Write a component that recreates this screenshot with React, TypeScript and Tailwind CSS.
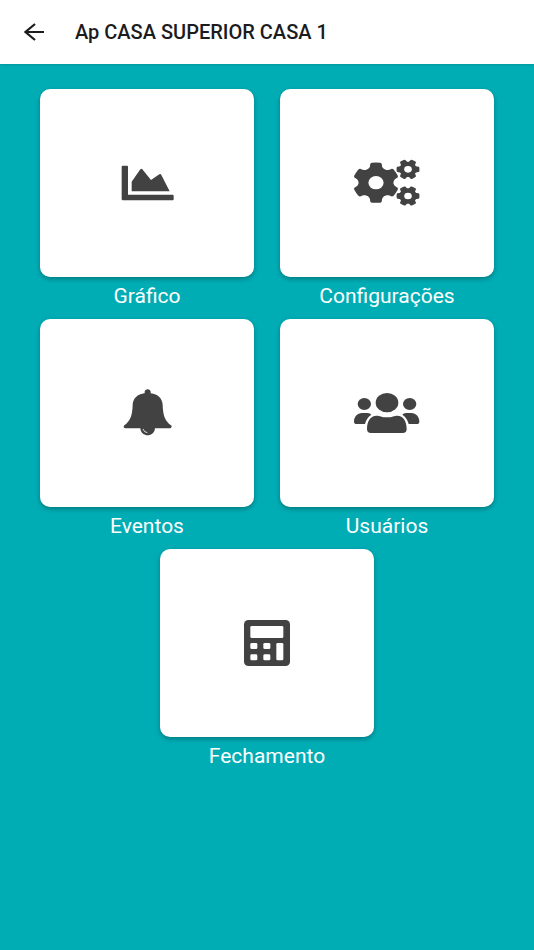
import type { ReactNode } from "react";

const Gear = ({ transform, body, tooth, hole, start }: {
  transform: string;
  body: number;
  tooth: string;
  hole: number;
  start: number;
}) => (
  <g transform={transform}>
    <circle r={body} />
    {[0, 60, 120, 180, 240, 300].map((angle) => (
      <path key={angle} d={tooth} transform={`rotate(${angle + start})`} />
    ))}
    <circle r={hole} fill="#fff" />
  </g>
);

const smallTooth = "M-10 -18 L-8 -28 Q-7 -30 -4 -30 H4 Q7 -30 8 -28 L10 -18Z";

const items: { label: string; viewBox: string; icon: ReactNode }[] = [
  {
    label: "Gráfico",
    viewBox: "36 24 210 150",
    icon: (
      <>
        <path d="M68 47h13q3 0 3 3v84h134q3 0 3 3v11q0 3-3 3H69q-4 0-4-4V50q0-3 3-3z" />
        <path d="M95 124V95l26-37q3-4 6 0l26 32 25-17q4-2 6 2l25 49z" />
      </>
    ),
  },
  {
    label: "Configurações",
    viewBox: "36 24 210 150",
    icon: (
      <>
        <Gear
          transform="translate(108 98) scale(1.14 1)"
          body={46}
          hole={20}
          start={0}
          tooth="M-22 -38 L-16 -48 L-15 -57 Q-14 -59 -11 -60 Q0 -61 11 -60 Q14 -59 15 -57 L16 -48 L22 -38Z"
        />
        <Gear transform="translate(204 58) scale(1.14 1)" body={23} hole={10} start={30} tooth={smallTooth} />
        <Gear transform="translate(204 138) scale(1.14 1)" body={23} hole={10} start={30} tooth={smallTooth} />
      </>
    ),
  },
  {
    label: "Eventos",
    viewBox: "36 39 210 150",
    icon: (
      <>
        <path d="M134 55v-5c0-10 18-10 18 0v5C174 58 187 70 188 90C189 122 195 138 213 151C217 155 214 160 209 160H165C163 188 123 188 121 160H77C71 160 69 155 73 151C91 138 97 122 98 90C99 70 112 58 134 55z" />
        <path d="M129 162q3 10 13 11" fill="none" stroke="#fff" strokeWidth="2.5" />
      </>
    ),
  },
  {
    label: "Usuários",
    viewBox: "36 39 210 150",
    icon: (
      <>
        <ellipse cx="141" cy="83" rx="34" ry="29" />
        <ellipse cx="73" cy="87" rx="20" ry="18" />
        <ellipse cx="209" cy="87" rx="20" ry="18" />
        <path d="M81 162c0-23 10-40 29-40 9 0 16 5 31 5s22-5 31-5c18 0 28 17 28 40 0 8-4 12-12 12H93c-8 0-12-4-12-12z" />
        <path d="M94 119c-4-4-10-5-16-5H66c-14 0-24 11-24 26 0 5 3 7 8 7h25c3-12 9-22 19-28z" />
        <path d="M187 119c4-4 10-5 16-5h11c14 0 24 11 24 26 0 5-3 7-8 7h-24c-3-12-9-22-19-28z" />
      </>
    ),
  },
  {
    label: "Fechamento",
    viewBox: "36 38 210 150",
    icon: (
      <>
        <rect x="72" y="44" width="138" height="138" rx="13" />
        <g fill="#fff">
          <rect x="91" y="62" width="99" height="36" rx="4" />
          <rect x="91" y="113" width="21" height="18" rx="4" />
          <rect x="130" y="113" width="21" height="18" rx="4" />
          <rect x="91" y="147" width="21" height="18" rx="4" />
          <rect x="130" y="147" width="21" height="18" rx="4" />
          <rect x="169" y="113" width="21" height="52" rx="4" />
        </g>
      </>
    ),
  },
];

export default function App() {
  return (
    <div className="min-h-screen bg-[#00adb5] font-['Roboto',sans-serif]">
      <header className="flex h-16 items-center gap-[27px] bg-white pl-5 text-[#1c1c1e] shadow-sm">
        <button type="button" aria-label="Voltar" className="p-1">
          <svg viewBox="0 0 20 18" className="h-[18px] w-5" fill="none" stroke="currentColor" strokeWidth="2.2">
            <path d="M20 9H1.5M11 1 1.500 9l9.500 8" />
          </svg>
        </button>
        <h1 className="text-xl font-medium">Ap CASA SUPERIOR CASA 1</h1>
      </header>
      <main className="flex flex-wrap justify-center gap-x-[26px] gap-y-1 px-10 pt-[25px]">
        {items.map((item) => (
          <button key={item.label} type="button" className="w-[calc(50%-13px)] text-white">
            <span className="flex h-[188px] items-center justify-center rounded-[10px] bg-white shadow-[0_2px_5px_rgba(0,0,0,0.3)]">
              <svg viewBox={item.viewBox} className="h-[50px] w-[70px]" fill="#424242">
                {item.icon}
              </svg>
            </span>
            <span className="block text-[21px] leading-[38px]">{item.label}</span>
          </button>
        ))}
      </main>
    </div>
  );
}
